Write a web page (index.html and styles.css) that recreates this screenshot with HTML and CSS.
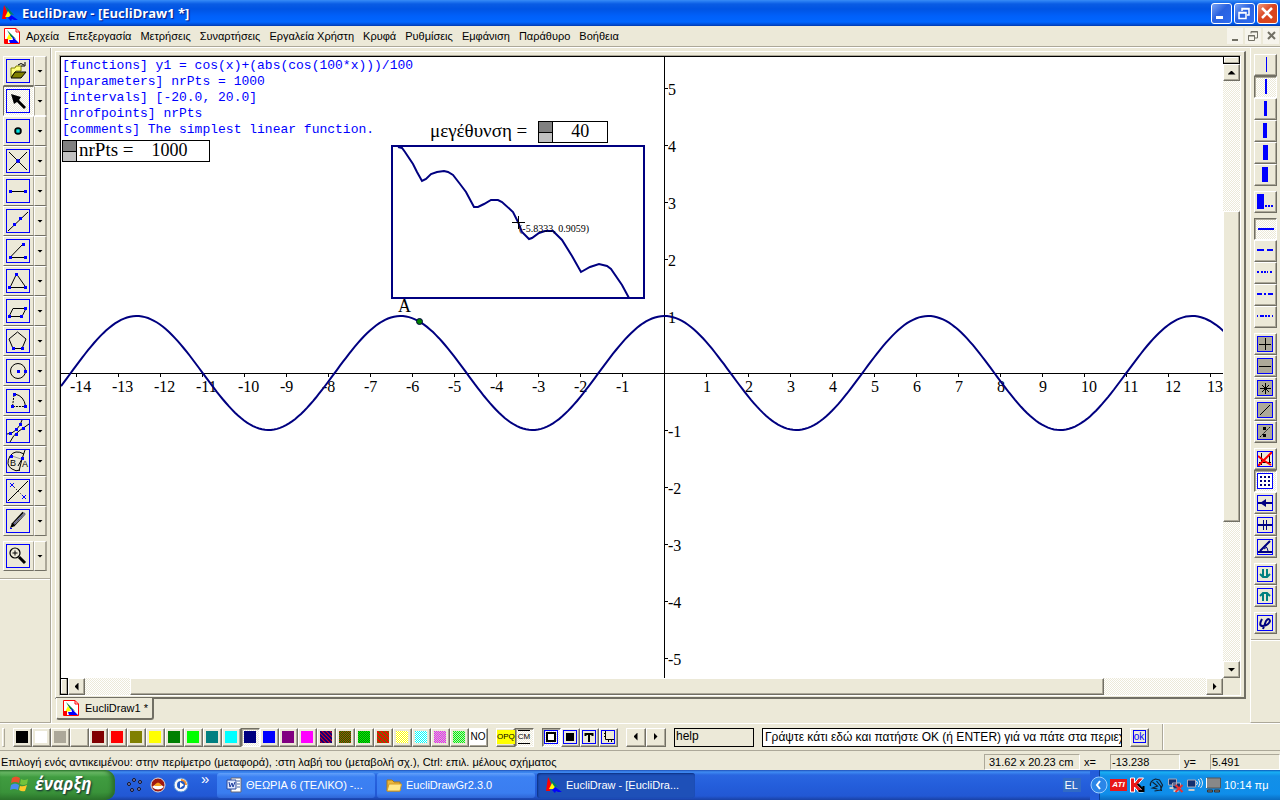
FILE: index.html
```html
<!DOCTYPE html>
<html lang="el">
<head>
<meta charset="utf-8">
<title>EucliDraw - [EucliDraw1 *]</title>
<link rel="stylesheet" href="styles.css">
</head>
<body>
<svg class="defs" aria-hidden="true">
  <symbol id="logo" viewBox="0 0 16 16"><path d="M3 0 12 10 7 9z" fill="#008060"/><path d="M2 0 5 6 4 14 0 14z" fill="red"/><path d="M6 6 10 12H3z" fill="#ff0"/><path d="M9 10 16 15 12 15 10 14 9 16 6 13z" fill="#00f"/></symbol>
  <symbol id="doc" viewBox="0 0 16 16"><path d="M.5.5H12L15.500 4V15.500H.5z" fill="#fff" stroke="red"/><path d="M12 .5V4h3.500" fill="none" stroke="red"/><path d="M3 2 12 11 7 9z" fill="#008040"/><path d="M5 6 8 11 2 12z" fill="#ff0"/><path d="M8 8 15 15H6L5 12 9 12z" fill="#00f"/><path d="M1 11H4V15H1z" fill="red"/></symbol>
  <symbol id="folder" viewBox="0 0 16 16"><path d="M1 3H6L8 5H14V14H1z" fill="#e9b63c" stroke="#a87818"/><path d="M3 7H15.500L14 14H1z" fill="#ffe98c" stroke="#d39c28"/></symbol>
  <symbol id="dots" viewBox="0 0 12 12"><path d="M0 .5H12M0 2.500H12M0 4.500H12M0 6.500H12M0 8.500H12M0 10.500H12" stroke="currentColor" stroke-dasharray="1 1"/><path d="M1 1.500H12M1 3.500H12M1 5.500H12M1 7.500H12M1 9.500H12M1 11.500H12" stroke="currentColor" stroke-dasharray="1 1"/></symbol>
  <symbol id="hatch" viewBox="0 0 12 12"><path d="M-1 9 3 13M-1 5 7 13M-1 1 11 13M1-1 13 11M5-1 13 7M9-1 13 3" stroke="currentColor" stroke-width="1.200"/></symbol>
</svg>

<header class="titlebar">
  <svg class="i16"><use href="#logo"/></svg>
  <h1>EucliDraw - [EucliDraw1 *]</h1>
  <div class="winbtns">
    <button aria-label="Minimize"><svg viewBox="0 0 19 19"><path d="M4 12H11V15H4z" fill="#fff"/></svg></button>
    <button aria-label="Restore"><svg viewBox="0 0 19 19"><path d="M4 8.500H11V14.500H4zM4 9H11M7 7V4.500H14V11H12M7 5H14" fill="none" stroke="#fff" stroke-width="1.500"/></svg></button>
    <button class="close" aria-label="Close"><svg viewBox="0 0 19 19"><path d="M4 4 14 14M14 4 4 14" stroke="#fff" stroke-width="2.500"/></svg></button>
  </div>
</header>

<nav class="menubar">
  <svg class="i16"><use href="#doc"/></svg>
  <button>Αρχεία</button><button>Επεξεργασία</button><button>Μετρήσεις</button><button>Συναρτήσεις</button><button>Εργαλεία Χρήστη</button><button>Κρυφά</button><button>Ρυθμίσεις</button><button>Εμφάνιση</button><button>Παράθυρο</button><button>Βοήθεια</button>
  <div class="mdibtns">
    <button aria-label="Minimize document"><svg viewBox="0 0 16 16"><path d="M5 11H11V13H5z" fill="#716f64"/></svg></button>
    <button aria-label="Restore document"><svg viewBox="0 0 16 16"><path d="M3.500 7.500H9.500V12.500H3.500zM3 8H10M6 5.500V3.500H12.500V10H10M6 4H13" fill="none" stroke="#716f64"/></svg></button>
    <button aria-label="Close document"><svg viewBox="0 0 16 16"><path d="M5 4 12 11M12 4 5 11" stroke="#716f64" stroke-width="2"/></svg></button>
  </div>
</nav>

<main class="workspace">
  <aside class="lefttools">
    <div class="toolset">
      <div class="tool"><button aria-label="Άνοιγμα"><svg viewBox="0 0 22 22"><path d="M4 8H8L9 6H14V11H9L4 17z" fill="#ffff80" stroke="#808000"/><path d="M8 12H19L14 18H4z" fill="#808000" stroke="#000"/><path d="M11 5Q14 2 17 5M18 2V6H14" fill="none" stroke="#000"/></svg></button><button class="drop" aria-label="Επιλογές"></button></div>
      <div class="tool on"><button aria-label="Επιλογή" aria-pressed="true"><svg viewBox="0 0 22 22"><path d="M4 4 14 7 12 10 19 17 17 19 10 12 7 14z"/></svg></button><button class="drop" aria-label="Επιλογές"></button></div>
      <div class="tool"><button aria-label="Σημείο"><svg viewBox="0 0 22 22"><circle cx="11" cy="11" r="3" fill="#00a0a0" stroke="#000" stroke-width="1.500"/><path d="M10 11h2M11 10v2" stroke="#0ff"/></svg></button><button class="drop" aria-label="Επιλογές"></button></div>
      <div class="tool"><button aria-label="Τομή"><svg viewBox="0 0 22 22"><path d="M2 2 20 20M20 2 2 20" stroke="#000"/><circle cx="11" cy="11" r="2" fill="#00f"/></svg></button><button class="drop" aria-label="Επιλογές"></button></div>
      <div class="tool"><button aria-label="Τμήμα"><svg viewBox="0 0 22 22"><path d="M3 11.500H19" stroke="#000"/><path d="M2 10h3v3H2zM17 10h3v3H17z" fill="#00f"/></svg></button><button class="drop" aria-label="Επιλογές"></button></div>
      <div class="tool"><button aria-label="Ευθεία"><svg viewBox="0 0 22 22"><path d="M1 21 21 2" stroke="#000"/><path d="M6 13h3v3H6zM12 7h3v3H12z" fill="#00f"/></svg></button><button class="drop" aria-label="Επιλογές"></button></div>
      <div class="tool"><button aria-label="Γωνία"><svg viewBox="0 0 22 22"><path d="M16 4 3 17.500H19" fill="none" stroke="#000"/><path d="M15 3h3v3H15zM2 16h3v3H2zM17 16h3v3H17z" fill="#00f"/></svg></button><button class="drop" aria-label="Επιλογές"></button></div>
      <div class="tool"><button aria-label="Τρίγωνο"><svg viewBox="0 0 22 22"><path d="M9.500 4 3 17.500H19z" fill="none" stroke="#000"/><path d="M8 3h3v3H8zM1 16h3v3H1zM17 16h3v3H17z" fill="#00f"/></svg></button><button class="drop" aria-label="Επιλογές"></button></div>
      <div class="tool"><button aria-label="Παραλληλόγραμμο"><svg viewBox="0 0 22 22"><path d="M6 8.500H19L15 16.500H2z" fill="none" stroke="#000"/><path d="M17 7h3v3H17zM1 15h3v3H1zM13 15h3v3H13z" fill="#00f"/></svg></button><button class="drop" aria-label="Επιλογές"></button></div>
      <div class="tool"><button aria-label="Πολύγωνο"><svg viewBox="0 0 22 22"><path d="M10.500 2 19 9 15 18.500H6L2 9z" fill="none" stroke="#000"/><path d="M5 17h3v3H5zM14 17h3v3H14z" fill="#00f"/></svg></button><button class="drop" aria-label="Επιλογές"></button></div>
      <div class="tool"><button aria-label="Κύκλος"><svg viewBox="0 0 22 22"><circle cx="11" cy="11" r="7.500" fill="none" stroke="#000"/><path d="M10 10h3v3H10zM17 10h3v3H17z" fill="#00f"/></svg></button><button class="drop" aria-label="Επιλογές"></button></div>
      <div class="tool"><button aria-label="Τόξο"><svg viewBox="0 0 22 22"><path d="M8 4Q17 6 18.500 16" fill="none" stroke="#000"/><path d="M7 5 5.500 16.500H18" fill="none" stroke="#000" stroke-dasharray="2 1"/><path d="M6 3h3v3H6zM4 15h3v3H4zM17 15h3v3H17z" fill="#00f"/></svg></button><button class="drop" aria-label="Επιλογές"></button></div>
      <div class="tool"><button aria-label="Κωνική"><svg viewBox="0 0 22 22"><path d="M0 14Q5 14 9 10Q14 5 15 0M3 22Q6 15 12 11L22 4" fill="none" stroke="#000"/><path d="M2 12h3v3H2zM8 8h3v3H8zM12 3h3v3H12zM15 7h3v3H15zM8 13h3v3H8z" fill="#00f"/></svg></button><button class="drop" aria-label="Επιλογές"></button></div>
      <div class="tool"><button aria-label="Τόξο ΒΑ"><svg viewBox="0 0 22 22"><path d="M17 4Q8-1 3 6Q-2 15 5 19Q9 22 13 20M18 0 15 9 12 21M15 9 11 16" fill="none" stroke="#000"/><path d="M5 6 14 9" stroke="#999"/><path d="M3 5h3v3H3zM14 7h3v3H14z" fill="#00f"/><text x="3" y="16" class="tiny">B</text><text x="15" y="17" class="tiny">A</text></svg></button><button class="drop" aria-label="Επιλογές"></button></div>
      <div class="tool"><button aria-label="Συμμετρία"><svg viewBox="0 0 22 22"><path d="M1 21 21 1" stroke="#000"/><path d="M5 5 17 17" stroke="#000" stroke-dasharray="1 2"/><path d="M3 3 7 7M7 3 3 7M15 15 19 19M19 15 15 19" stroke="#00f"/></svg></button><button class="drop" aria-label="Επιλογές"></button></div>
      <div class="tool"><button aria-label="Μολύβι"><svg viewBox="0 0 22 22"><path d="M6 15 17 3" stroke="#000" stroke-width="4"/><path d="M7 14 18 3" stroke="#999" stroke-width="2"/><path d="M7 14 18 3" stroke="#33a" stroke-dasharray="1 1"/><path d="M3 18 5 13 8 16z"/><path d="M3 18h2v1H3z" fill="#00f"/></svg></button><button class="drop" aria-label="Επιλογές"></button></div>
      <div class="tool apart"><button aria-label="Μεγέθυνση"><svg viewBox="0 0 22 22"><circle cx="8" cy="8" r="5" fill="none" stroke="#000" stroke-width="1.200"/><path d="M5.500 8H10.500M8 5.500V10.500" stroke="#000"/><path d="M12 12 18 18" stroke="#000" stroke-width="3"/></svg></button><button class="drop" aria-label="Επιλογές"></button></div>
    </div>
  </aside>

  <section class="center">
    <div class="document">
      <div class="sheet">
        <div class="canvas">
          <svg id="plot" class="plot" role="img" aria-label="y = cos(x)"></svg>
          <pre class="definition">[functions] y1 = cos(x)+(abs(cos(100*x)))/100
[nparameters] nrPts = 1000
[intervals] [-20.0, 20.0]
[nrofpoints] nrPts
[comments] The simplest linear function.</pre>
          <div class="counter points"><span class="spin"><button aria-label="Αύξηση"></button><button aria-label="Μείωση"></button></span><label for="nrpts">nrPts =</label><input id="nrpts" value="1000"></div>
          <div class="zoomctl"><label for="mag">μεγέθυνση =</label><div class="counter"><span class="spin"><button aria-label="Αύξηση"></button><button aria-label="Μείωση"></button></span><input id="mag" value="40"></div></div>
        </div>
        <div class="vscroll"><i class="split"></i><button class="up" aria-label="Πάνω"></button><i class="track t1"></i><i class="thumb"></i><i class="track t2"></i><button class="down" aria-label="Κάτω"></button></div>
        <div class="hscroll"><i class="split"></i><button class="back" aria-label="Αριστερά"></button><i class="track t1"></i><i class="thumb"></i><i class="track t2"></i><button class="fwd" aria-label="Δεξιά"></button></div>
      </div>
    </div>
    <button class="tab"><svg class="i16"><use href="#doc"/></svg>EucliDraw1 *</button>
  </section>

  <aside class="righttools">
    <div class="palette">
      <div class="group">
        <button aria-label="Πάχος 1"><svg viewBox="0 0 18 18"><path d="M9 1h1v15H9z" fill="#00f"/></svg></button>
        <button class="on" aria-label="Πάχος 2"><svg viewBox="0 0 18 18"><path d="M8 1h2v15H8z" fill="#00f"/></svg></button>
        <button aria-label="Πάχος 3"><svg viewBox="0 0 18 18"><path d="M7 1h3v15H7z" fill="#00f"/></svg></button>
        <button aria-label="Πάχος 4"><svg viewBox="0 0 18 18"><path d="M6 1h4v15H6z" fill="#00f"/></svg></button>
        <button aria-label="Πάχος 5"><svg viewBox="0 0 18 18"><path d="M6 1h5v15H6z" fill="#00f"/></svg></button>
        <button aria-label="Πάχος 6"><svg viewBox="0 0 18 18"><path d="M5 1h6v15H5z" fill="#00f"/></svg></button>
      </div>
      <div class="group">
        <button aria-label="Άλλο πάχος"><svg viewBox="0 0 18 18"><path d="M0 1h7v15H0zM8 12h2v2H8zM11 12h2v2h-2zM14 12h2v2h-2z" fill="#00f"/></svg></button>
      </div>
      <div class="group">
        <button class="on" aria-label="Συνεχής"><svg viewBox="0 0 18 18"><path d="M1 9H17" stroke="#00f" stroke-width="2"/></svg></button>
        <button aria-label="Παύλες"><svg viewBox="0 0 18 18"><path d="M0 8H7M10 8H16" stroke="#00f" stroke-width="2"/></svg></button>
        <button aria-label="Τελείες"><svg viewBox="0 0 18 18"><path d="M0 8H2M4 8H6M7 8H9M10 8H11M13 8H15" stroke="#00f" stroke-width="2"/></svg></button>
        <button aria-label="Παύλα τελεία"><svg viewBox="0 0 18 18"><path d="M0 8H5M7 8H9M11 8H16" stroke="#00f" stroke-width="2"/></svg></button>
        <button aria-label="Παύλα δύο τελείες"><svg viewBox="0 0 18 18"><path d="M0 8H1M3 8H7M8 8H10M11 8H13M15 8H16" stroke="#00f" stroke-width="2"/></svg></button>
      </div>
      <div class="group boxed shaded">
        <button aria-label="Σταυρός"><svg viewBox="0 0 14 14"><path d="M1 7.500H13M7.500 1V13" stroke="#000"/></svg></button>
        <button aria-label="Οριζόντια"><svg viewBox="0 0 14 14"><path d="M1 7.500H13" stroke="#000"/></svg></button>
        <button aria-label="Αστέρι"><svg viewBox="0 0 14 14"><path d="M2 7.500H13M7.500 2V13M4 4 11 11M11 4 4 11" stroke="#000"/></svg></button>
        <button aria-label="Διαγώνια"><svg viewBox="0 0 14 14"><path d="M2 12 12 2" stroke="#000"/></svg></button>
        <button aria-label="Σημεία"><svg viewBox="0 0 14 14"><path d="M2 12 12 2" stroke="#000" stroke-dasharray="2 1"/><path d="M5 2h3v3H5zM5 9h3v3H5z"/></svg></button>
      </div>
      <div class="group boxed">
        <button aria-label="Κλίμακα"><svg viewBox="0 0 14 14"><path d="M3.500 1V13M1 10.500H13M11.500 3V10" stroke="#000"/><path d="M0 14 5 9 14 0M0 4 5 8 13 13" fill="none" stroke="red" stroke-width="2"/></svg></button>
        <button class="on" aria-label="Πλέγμα"><svg viewBox="0 0 14 14"><path d="M2 3H13M2 7H13M2 11H13" stroke="#000080" stroke-width="2" stroke-dasharray="2 2"/></svg></button>
        <button aria-label="Βέλος"><svg viewBox="0 0 14 14"><path d="M0 7H14" stroke="#000080" stroke-width="2"/><path d="M2 7 8 3V11z" fill="#000080"/></svg></button>
        <button aria-label="Ίσα τμήματα"><svg viewBox="0 0 14 14"><path d="M0 7H14" stroke="#000080" stroke-width="2"/><path d="M5.500 2V12M8.500 2V12" stroke="#000080"/></svg></button>
        <button aria-label="Μέτρο γωνίας"><svg viewBox="0 0 14 14"><path d="M12 1 2 11M0 12H14" fill="none" stroke="#000080" stroke-width="2"/><path d="M6 6Q10 7 10 11M6 9 9 7" fill="none" stroke="#000080"/></svg></button>
      </div>
      <div class="group boxed">
        <button aria-label="Κάτω επίπεδο"><svg viewBox="0 0 14 14"><path d="M5 2V10M9 2V10M2 7 5 10H9L12 7" fill="none" stroke="#008080" stroke-width="2"/></svg></button>
        <button aria-label="Πάνω επίπεδο"><svg viewBox="0 0 14 14"><path d="M5 12V4M9 12V4M2 7 5 4H9L12 7" fill="none" stroke="#008080" stroke-width="2"/></svg></button>
      </div>
      <div class="group boxed">
        <button aria-label="Συνάρτηση"><svg viewBox="0 0 14 14"><path d="M4 3Q0 10 5 10Q11 9 12 5Q11 1 8 5L5 13" fill="none" stroke="#000080" stroke-width="2"/></svg></button>
      </div>
    </div>
  </aside>
</main>

<section class="bottombar">
  <i class="grip"></i>
  <div class="set swatches">
    <button class="c-black" aria-label="Μαύρο"></button><button class="c-white" aria-label="Λευκό"></button><button class="c-gray" aria-label="Γκρι"></button><button class="c-beige" aria-label="Μπεζ"></button><button class="c-maroon" aria-label="Βυσσινί"></button><button class="c-red" aria-label="Κόκκινο"></button><button class="c-olive" aria-label="Λαδί"></button><button class="c-yellow" aria-label="Κίτρινο"></button><button class="c-green" aria-label="Πράσινο"></button><button class="c-lime" aria-label="Λαχανί"></button><button class="c-teal" aria-label="Πετρόλ"></button><button class="c-aqua" aria-label="Γαλάζιο"></button><button class="c-navy on" aria-label="Σκούρο μπλε"></button><button class="c-blue" aria-label="Μπλε"></button><button class="c-purple" aria-label="Μωβ"></button><button class="c-pink" aria-label="Φούξια"></button><button class="mix m1" aria-label="Σχέδιο 1"><svg><use href="#hatch"/></svg></button><button class="mix m2" aria-label="Σχέδιο 2"><svg><use href="#dots"/></svg></button><button class="mix m3" aria-label="Σχέδιο 3"><svg><use href="#dots"/></svg></button><button class="mix m4" aria-label="Σχέδιο 4"><svg><use href="#hatch"/></svg></button><button class="mix m5" aria-label="Σχέδιο 5"><svg><use href="#dots"/></svg></button><button class="mix m6" aria-label="Σχέδιο 6"><svg><use href="#dots"/></svg></button><button class="mix m7" aria-label="Σχέδιο 7"><svg><use href="#dots"/></svg></button><button class="mix m8" aria-label="Σχέδιο 8"><svg><use href="#dots"/></svg></button><button class="word no">NO</button>
  </div>
  <div class="set"><button class="word opq"><span>OPQ</span></button><button class="word cm on"><span>CM</span></button></div>
  <div class="set pics">
    <button class="on" aria-label="Περίγραμμα"><svg viewBox="0 0 12 12"><path d="M2 2H10V10H2z" fill="#fff" stroke="#000" stroke-width="2"/></svg></button>
    <button aria-label="Γέμισμα"><svg viewBox="0 0 12 12"><path d="M2 2H10V10H2z"/></svg></button>
    <button aria-label="Κείμενο"><svg viewBox="0 0 12 12"><path d="M2 3H10M6 3V11M2.500 2V5M9.500 2V5" fill="none" stroke="#000" stroke-width="2"/></svg></button>
    <button aria-label="Άξονες"><svg viewBox="0 0 12 12"><path d="M3.500 0V8.500H12M2 2.500H3M2 5.500H3M6.500 9V11M9.500 9V11" fill="none" stroke="#000"/></svg></button>
  </div>
  <div class="set arrows"><button class="back" aria-label="Προηγούμενο"></button><button class="fwd" aria-label="Επόμενο"></button></div>
  <input class="help" aria-label="Θέμα" value="help">
  <input class="goto" aria-label="Μετάβαση" value="Γράψτε κάτι εδώ και πατήστε OK (ή ENTER) γιά να πάτε στα περιεχόμενα">
  <div class="set"><button class="word ok"><span>ok</span></button></div>
  <div class="rest"></div>
</section>

<section class="statusbar">
  <p>Επιλογή ενός αντικειμένου: στην περίμετρο (μεταφορά), :στη λαβή του (μεταβολή σχ.), Ctrl: επιλ. μέλους σχήματος</p>
  <output class="size">31.62 x 20.23 cm</output><span>x=</span><output>-13.238</output><span>y=</span><output>5.491</output>
</section>

<footer class="taskbar">
  <button class="start"><svg viewBox="0 0 20 18"><path d="M2 3Q6 0 10 3L9 8Q5 6 1 8z" fill="#e8502c"/><path d="M11 4Q14 6 18 4L17 9Q13 11 10 9z" fill="#74c43c"/><path d="M1 10Q5 7 9 10L8 15Q4 13 0 15z" fill="#4a8cf0"/><path d="M10 11Q13 12 17 10L15 16Q12 17 9 15z" fill="#ffc828"/></svg>έναρξη</button>
  <div class="quick">
    <button aria-label="GeoGebra"><svg viewBox="0 0 16 16"><g fill="#88b" stroke="#112"><circle cx="7" cy="3" r="1.500"/><circle cx="13" cy="5" r="1.500"/><circle cx="12" cy="12" r="1.500"/><circle cx="5" cy="13" r="1.500"/><circle cx="2" cy="7" r="1.500"/></g></svg></button>
    <button aria-label="Sketchpad"><svg viewBox="0 0 16 16"><circle cx="8" cy="8" r="7" fill="#a01810" stroke="#ddd"/><path d="M2 10Q8 4 14 10Q8 15 2 10" fill="#fff"/><path d="M4 9Q8 2 12 9z" fill="#f6a020"/></svg></button>
    <button aria-label="Media Player"><svg viewBox="0 0 16 16"><circle cx="8" cy="8" r="7" fill="#f7f7f7" stroke="#4688d8"/><path d="M8 2A6 6 0 0 1 14 8H8z" fill="#f09030"/><circle cx="8" cy="8" r="4" fill="#2058c0"/><path d="M7 5 11 8 7 11z" fill="#fff"/></svg></button>
    <span>»</span>
  </div>
  <div class="tasks">
    <button><svg viewBox="0 0 16 16"><path d="M5 1H15V15H5z" fill="#fff" stroke="#667"/><path d="M11 4H14M11 7H14M11 10H14" stroke="#46a"/><path d="M1 3H10V12H1z" fill="#dfe8ff" stroke="#2a4a9a"/><path d="M3 5 4 10 6 6 7 10 9 5" fill="none" stroke="#1a3a9a"/></svg>ΘΕΩΡΙΑ 6 (ΤΕΛΙΚΟ) -...</button>
    <button><svg viewBox="0 0 16 16"><use href="#folder"/></svg>EucliDrawGr2.3.0</button>
    <button class="active"><svg viewBox="0 0 16 16"><use href="#logo"/></svg>EucliDraw - [EucliDra...</button>
  </div>
  <span class="lang">EL</span>
  <div class="tray">
    <button class="expand" aria-label="Εμφάνιση κρυφών εικονιδίων"><svg viewBox="0 0 18 18"><circle cx="9" cy="9" r="8" fill="#2b86e8" stroke="#9cd0ff"/><path d="M10 5 7 9 10 13" fill="none" stroke="#fff" stroke-width="2"/></svg></button>
    <b class="ati">ATI</b>
    <svg viewBox="0 0 16 16"><path d="M1 1H5V6L9 1H14L8 8 14 15H9L5 10V15H1z" fill="#e81818" stroke="#fff"/><path d="M8 7 14 13M14 9V14H9" fill="none" stroke="#000" stroke-width="2"/></svg>
    <svg viewBox="0 0 16 16"><path d="M2 9Q1 4 7 2L11 3 14 8 12 13 6 14M4 5 9 9 4 11 9 12M8 4 12 9 13 14" fill="none" stroke="#123" stroke-width="1.200"/></svg>
    <svg viewBox="0 0 16 16"><path d="M1 2H9V8H1zM5 6H13V12H5z" fill="#123070" stroke="#aab"/><path d="M2 11H6M6 14H11" stroke="#ccc" stroke-width="2"/><path d="M8 8 15 15M15 8 8 15" stroke="#e83030" stroke-width="2"/></svg>
    <svg viewBox="0 0 16 16"><path d="M1 3H9V10H1z" fill="#123070" stroke="#aab"/><path d="M2 13H8" stroke="#ccc" stroke-width="2"/><path d="M10 4Q12 6 10 8M12 2Q15 6 12 10M14 1Q18 6 14 11" fill="none" stroke="#eee"/></svg>
    <svg viewBox="0 0 16 16"><path d="M1 1H15V11H1z" fill="#888" stroke="#555"/><path d="M1 1V11" stroke="#fff"/><path d="M2 13h5v2H2zM9 13h5v2H9z" fill="#777" stroke="#333"/></svg>
    <time>10:14 πμ</time>
  </div>
</footer>
<script src="plot.js"></script>
</body>
</html>
```
FILE: styles.css
```css
* { box-sizing: border-box; }
:root { --face: #ece9d8; --mid: #aca899; --dark: #716f64; --check: repeating-conic-gradient(#fff 0 25%, #ece9d8 0 50%) 0 0 / 2px 2px; }
body { margin: 0; min-height: 100vh; display: flex; flex-direction: column; background: var(--face); font: 11px/14px "Liberation Sans", "DejaVu Sans", sans-serif; color: #000; overflow-x: hidden; }
button, input { font: inherit; color: inherit; padding: 0; margin: 0; border: 0; background: none; border-radius: 0; }
svg { display: block; }
.defs { width: 0; height: 0; position: absolute; }
.i16 { width: 16px; height: 16px; flex: none; }

.titlebar { height: 26px; flex: none; display: flex; align-items: center; gap: 4px; padding: 0 2px; background: linear-gradient(#3a8cf5 0, #2a80f4 1px, #0a5ce4 4px, #0054e3 9px, #0060fa 16px, #0066ff 22px, #0048cc 25px, #0038a8 26px); }
.titlebar h1 { margin: 0; flex: 1; font: bold 13px/16px "Open Sans", sans-serif; color: #fff; text-shadow: 1px 1px 1px #0a1883; }
.winbtns { display: flex; gap: 2px; }
.winbtns button { width: 21px; height: 21px; border: 1px solid #fff; border-radius: 3px; background: linear-gradient(135deg, #7ba4f4, #2a62e0 45%, #2e6cf0); }
.winbtns .close { background: linear-gradient(135deg, #f09a7c, #da4420 45%, #d8481c); }
.winbtns svg { width: 19px; height: 19px; }

.menubar { height: 22px; flex: none; display: flex; align-items: center; gap: 9px; padding: 0 1px 2px 4px; border-bottom: 1px solid #fff; box-shadow: inset 0 -1px var(--mid); }
.menubar > .i16 { margin-right: -3px; }
.mdibtns { margin-left: auto; display: flex; gap: 2px; }
.mdibtns button { width: 16px; height: 16px; background: #f6f4ec; }

.workspace { flex: 1; display: flex; min-height: 0; }
.lefttools { width: 51px; flex: none; padding-top: 8px; border-right: 1px solid var(--mid); border-bottom: 1px solid var(--mid); box-shadow: 1px 0 #fff; }
.toolset { height: 523px; padding-left: 3px; border-bottom: 1px solid var(--mid); box-shadow: 0 1px #fff; }
.tool { display: flex; height: 30px; width: 44px; }
.tool.apart { margin-top: 5px; }
.tool button { height: 30px; width: 31px; padding: 2px; border: 1px solid; border-color: #fff var(--mid) var(--dark) #fff; }
.tool svg { width: 24px; height: 24px; border: 1px solid #00f; }
.tool .drop { width: 13px; border-right: 2px solid var(--mid); }
.tool.on button { background: var(--check); border-color: var(--dark) #fff #fff var(--dark); }
.tool.on .drop { background: none; border-color: #fff var(--mid) #fff var(--mid); }
.drop::after { content: ""; display: block; margin: 0 auto; width: 6px; height: 3px; background: #000; clip-path: polygon(0 0, 100% 0, 50% 100%); }
.tiny { font: 9px "Liberation Sans", sans-serif; }

.center { flex: 1; min-width: 0; display: flex; flex-direction: column; align-items: flex-start; padding: 3px 4px; }
.document { align-self: stretch; flex: 1; display: flex; border: 1px solid #fff; border-right: 2px solid var(--dark); border-bottom: 2px solid var(--dark); padding: 3px 3px 1px 3px; }
.sheet { flex: 1; min-width: 0; display: grid; grid-template: 1fr 17px / 1fr 17px; border: 1px solid; border-color: var(--mid) #fff #fff var(--mid); }
.canvas { position: relative; overflow: hidden; background: #fff; border: solid #000; border-width: 1px 0 0 1px; }
.plot { position: absolute; inset: 0; width: 100%; height: 100%; }
.plot text { font: 16px "Liberation Serif", serif; }
.plot .coords { font-size: 10px; }
.plot .name { font-size: 18px; }
.definition { position: absolute; left: 1px; top: 1px; margin: 0; color: #00f; font: 13px/16px "Liberation Mono", monospace; }
.counter { display: flex; width: 70px; height: 22px; border: 1px solid #000; background: #fff; font: 18px/20px "Liberation Serif", serif; }
.counter input { flex: 1; min-width: 0; padding-bottom: 2px; text-align: center; }
.spin { width: 14px; flex: none; display: flex; flex-direction: column; border-right: 1px solid #000; }
.spin button { flex: 1; background: #c0c0c0; }
.spin button:first-child { background: #808080; border-bottom: 1px solid #000; }
.points { position: absolute; left: 1px; top: 83px; width: 148px; }
.points label { padding-left: 2px; font-size: 19px; line-height: 18px; }
.points .spin + label + input { text-align: left; padding: 0 0 2px 18px; }
.zoomctl { position: absolute; left: 369px; top: 64px; display: flex; gap: 11px; font: 19px/20px "Liberation Serif", serif; }

.vscroll, .hscroll { display: flex; background: var(--check); }
.vscroll { flex-direction: column; }
.split { flex: none; border: 1px solid #000; background: var(--face); box-shadow: inset -1px -1px var(--mid), inset 1px 1px #fff; }
.vscroll .split { height: 8px; }
.hscroll .split { width: 8px; }
.vscroll button, .hscroll button, .thumb, .group button, .set button { background: var(--face); border: 1px solid; border-color: #fff var(--dark) var(--dark) #fff; box-shadow: inset -1px -1px var(--mid); display: grid; place-items: center; flex: none; }
.vscroll button { height: 17px; }
.hscroll button { width: 17px; }
.vscroll .t1 { flex: 131; } .vscroll .thumb { flex: 310; } .vscroll .t2 { flex: 140; }
.hscroll .t1 { flex: 45; } .hscroll .thumb { flex: 974; } .hscroll .t2 { flex: 102; }
.up::after, .down::after { content: ""; width: 8px; height: 4px; background: #000; clip-path: polygon(50% 0, 100% 100%, 0 100%); }
.down::after { clip-path: polygon(0 0, 100% 0, 50% 100%); }
.back::after, .fwd::after { content: ""; width: 4px; height: 8px; background: #000; clip-path: polygon(100% 0, 100% 100%, 0 50%); }
.fwd::after { clip-path: polygon(0 0, 100% 50%, 0 100%); }
.tab { display: flex; align-items: center; gap: 6px; height: 22px; margin: -1px 0 0 1px; padding: 0 4px 0 6px; border: 1px solid #fff; border-top: 0; border-right: 2px solid var(--dark); border-bottom: 2px solid var(--dark); border-radius: 0 0 3px 3px; background: var(--face); z-index: 1; }

.righttools { width: 30px; flex: none; border-left: 1px solid #fff; border-bottom: 1px solid var(--mid); padding-top: 6px; }
.palette { display: flex; flex-direction: column; gap: 5px; padding: 0 3px 5px; border-bottom: 1px solid var(--mid); box-shadow: 0 1px #fff; }
.group button { width: 23px; height: 22px; }
.group svg { width: 18px; height: 18px; }
.group.boxed svg { width: 16px; height: 16px; border: 1px solid #00f; background: var(--face); }
.boxed button { padding: 0 1px 1px 0; }
.group.boxed .on svg { background: #fff; }
.group.shaded svg { background: var(--mid); }
.group .on, .set .on { background: var(--check); border-color: var(--dark) #fff #fff var(--dark); box-shadow: inset 1px 1px var(--mid); }

.bottombar { height: 28px; flex: none; display: flex; align-items: center; gap: 8px; padding-left: 2px; border-top: 1px solid #fff; border-bottom: 1px solid var(--mid); }
.grip { width: 3px; height: 19px; border: 1px solid; border-color: #fff var(--mid) var(--mid) #fff; }
.set { display: flex; flex: none; }
.set button { width: 19px; height: 19px; padding: 0 1px 1px 0; }
.set.arrows button { width: 20px; }
.pics svg { width: 14px; height: 14px; border: 1px solid #00f; }
.swatches button::after { content: ""; width: 12px; height: 12px; background: var(--c); }
.swatches .no::after, .swatches .mix::after { content: none; }
.mix svg { width: 12px; height: 12px; background: var(--b); color: var(--a); }
.c-black { --c: #000; } .c-white { --c: #fff; } .c-gray { --c: #aca899; } .c-beige { --c: #ece9d8; }
.c-maroon { --c: #800000; } .c-red { --c: #f00; } .c-olive { --c: #808000; } .c-yellow { --c: #ff0; }
.c-green { --c: #008000; } .c-lime { --c: #0f0; } .c-teal { --c: #008080; } .c-aqua { --c: #0ff; }
.c-navy { --c: #000080; } .c-blue { --c: #00f; } .c-purple { --c: #800080; } .c-pink { --c: #f0f; }
.m1 { --a: #d00020; --b: #000080; }
.m2 { --a: #c03000; --b: #008000; }
.m3 { --a: #008000; --b: #0f0; }
.m4 { --a: #508000; --b: #f00; }
.m5 { --a: #ff0; --b: #fff; }
.m6 { --a: #0ff; --b: #fff; }
.m7 { --a: #f0f; --b: #c0e0c0; }
.m8 { --a: #0f0; --b: #c0e0c0; }
.set .word { font: 10px/12px "Liberation Sans", sans-serif; }
.set .no { background: #fff; }
.opq span { background: #ff0; font-size: 8px; line-height: 14px; }
.cm span { border-top: 1px solid #000; border-bottom: 1px solid #000; font-size: 8px; }
.ok span { border: 1px solid #00f; color: #00f; width: 13px; line-height: 11px; }
.help, .goto { height: 19px; border: 1px solid #000; font-size: 12px; min-width: 0; }
.help { width: 80px; line-height: 14px; padding: 0 1px 3px; }
.goto { width: 360px; background: #fff; padding: 0 0 0 2px; }
.rest { flex: 1; align-self: stretch; margin-left: 6px; border-left: 1px solid #fff; box-shadow: -1px 0 var(--mid); }

.statusbar { height: 19px; flex: none; display: flex; align-items: center; padding-left: 1px; padding-top: 2px; }
.statusbar p { margin: 0; flex: 1; min-width: 0; white-space: nowrap; overflow: hidden; }
.statusbar output { width: 70px; height: 16px; padding-left: 1px; border: 1px solid; border-color: var(--mid) #fff #fff var(--mid); }
.statusbar .size { width: 96px; padding-left: 4px; }
.statusbar span { width: 30px; padding-left: 4px; }

.taskbar { height: 30px; flex: none; display: flex; align-items: stretch; color: #fff; background: linear-gradient(#1f4fb8 0, #3f8cf3 2px, #2a66e0 5px, #245edb 15px, #2258d4 26px, #1941a5 30px); }
.start { width: 115px; display: flex; align-items: center; gap: 5px; padding: 0 0 2px 10px; border-radius: 0 10px 10px 0; font: italic bold 17px/22px "Open Sans", sans-serif; text-shadow: 1px 1px 2px #123; background: linear-gradient(#2f7d2f 0, #6fbf6b 2px, #409c40 7px, #3a933a 22px, #2c762c 30px); box-shadow: inset -3px 0 4px #2a6c2a; }
.start svg { width: 20px; height: 18px; }
.quick { width: 102px; display: flex; align-items: center; gap: 7px; padding-left: 12px; }
.quick svg { width: 16px; height: 16px; }
.quick span { font-size: 15px; padding: 0 0 12px 5px; }
.tasks { flex: 1; display: flex; gap: 2px; align-items: center; }
.tasks button { width: 158px; height: 25px; display: flex; align-items: center; gap: 4px; padding: 0 8px 0 9px; border-radius: 3px; background: linear-gradient(#62a0fa 0, #3c81f3 4px, #3a7df0 20px, #2f66d6); white-space: nowrap; }
.tasks svg { width: 16px; height: 16px; flex: none; }
.tasks .active { background: #1e50b8; box-shadow: inset 1px 1px 2px #0c2f80; }
.lang { align-self: center; padding: 0 3px 0 2px; background: #316ac5; margin-right: 9px; }
.tray { width: 190px; display: flex; align-items: center; gap: 2px; padding-right: 13px; background: linear-gradient(90deg, #245edb 9px, #0c3f9c 9px, #0c3f9c 10px, transparent 10px), linear-gradient(#0c59b9 0, #18b0f4 2px, #1290e8 6px, #0f8eea 24px, #0a6cc0 30px); }
.tray svg { width: 17px; height: 16px; flex: none; }
.tray .expand svg { width: 18px; height: 18px; }
.ati { width: 17px; height: 12px; flex: none; background: #e81818; font: italic bold 8px/12px "Liberation Sans", sans-serif; text-align: center; }
.tray time { margin-left: auto; white-space: nowrap; }
```
FILE: plot.js
```js
const svg = document.getElementById('plot');
const OX = 603, OY = 316, UX = 42, UY = 57;
const lens = [337,90,341,91,344,95,352,107,356,115,361,124,365,122,370,117,376,115,383,114,387,115,392,118,399,127,405,135,413,150,417,150,423,147,430,143,437,143,441,145,452,155,457,165,461,175,468,182,471,181,478,176,484,174,492,174,501,183,511,199,520,215,529,210,538,207,546,209,550,212,561,228,568,241];

function draw() {
  const { width, height } = svg.getBoundingClientRect();
  const parts = [];
  const line = (x1, y1, x2, y2) => parts.push(`<path d="M${x1} ${y1}L${x2} ${y2}" stroke="#000" shape-rendering="crispEdges"/>`);
  const text = (x, y, s, cls = '') => parts.push(`<text x="${x}" y="${y}" class="${cls}">${s}</text>`);

  line(0, OY + 0.5, width, OY + 0.5);
  line(OX + 0.5, 0, OX + 0.5, height);
  for (let i = -14; OX + i * UX < width; i++) {
    if (!i) continue;
    const x = OX + i * UX;
    line(x + 0.5, OY, x + 0.5, OY + 4);
    text(x - (i < 0 ? 6 : 3), OY + 19, i);
  }
  for (let j = 5; OY - j * UY + 8 < height; j--) {
    if (!j) continue;
    const y = OY - j * UY;
    line(OX, y + 0.5, OX + 4, y + 0.5);
    text(OX + 4, y + 7, j);
  }

  let d = '';
  for (let x = 0; x <= width + 3; x += 3) {
    d += `${d ? 'L' : 'M'}${x} ${(OY - UY * Math.cos((x - OX - 0.5) / UX)).toFixed(1)}`;
  }
  parts.push(`<path d="${d}" fill="none" stroke="#000080" stroke-width="2"/>`);

  parts.push('<rect x="331" y="89" width="252" height="152" fill="none" stroke="#000080" stroke-width="2"/>');
  parts.push(`<polyline points="${lens.join(' ')}" fill="none" stroke="#000080" stroke-width="2"/>`);
  line(451, 165.5, 464, 165.5);
  line(457.5, 159, 457.5, 172);
  text(458, 175, '(-5.8333, 0.9059)', 'coords');
  text(337, 255, 'A', 'name');
  parts.push('<circle cx="358.5" cy="264.5" r="3" fill="#008000" stroke="#000040"/>');
  svg.innerHTML = parts.join('');
}

draw();
addEventListener('resize', draw);
```
